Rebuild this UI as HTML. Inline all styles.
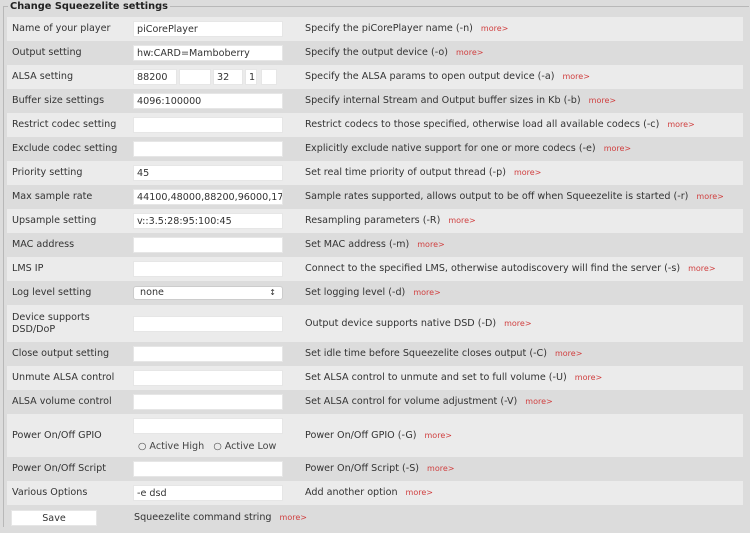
<!DOCTYPE html>
<html><head><meta charset="utf-8"><style>
html,body{margin:0;width:750px;height:533px;overflow:hidden}
body{background:#dcdcdc;font-family:"DejaVu Sans","Liberation Sans",sans-serif;font-size:9.6px;color:#333;position:relative}
.fs{position:absolute;left:3px;top:6px;width:745px;height:520px;border-top:1px solid #b8b8b8;border-left:1px solid #b8b8b8}
.lg{position:absolute;left:8px;top:1px;background:#dcdcdc;padding:0 2px;font-weight:bold;color:#222;font-size:9.8px;line-height:11px}
.r{position:absolute;left:7px;width:736px}
.l{background:#ebebeb}
.r span{position:absolute;white-space:nowrap}
.lab{left:5px}
.desc{left:298px}
.m{color:#d04040;font-size:8px;margin-left:8px}
.in{position:absolute;left:126px;width:150px;height:16px;background:#fff;border:1px solid #e6e6e6;box-sizing:border-box;font-size:9.6px;line-height:15px;padding-left:3px;white-space:nowrap;overflow:hidden}
</style></head><body>
<div class="fs"></div>
<div class="lg">Change Squeezelite settings</div>
<div id="c"></div>
<script>
var rows=[
["Name of your player","piCorePlayer","Specify the piCorePlayer name (-n)",17,24],
["Output setting","hw:CARD=Mamboberry","Specify the output device (-o)",41,24],
["ALSA setting","ALSA","Specify the ALSA params to open output device (-a)",65,24],
["Buffer size settings","4096:100000","Specify internal Stream and Output buffer sizes in Kb (-b)",89,24],
["Restrict codec setting","","Restrict codecs to those specified, otherwise load all available codecs (-c)",113,24],
["Exclude codec setting","","Explicitly exclude native support for one or more codecs (-e)",137,24],
["Priority setting","45","Set real time priority of output thread (-p)",161,24],
["Max sample rate","44100,48000,88200,96000,176400","Sample rates supported, allows output to be off when Squeezelite is started (-r)",185,24],
["Upsample setting","v::3.5:28:95:100:45","Resampling parameters (-R)",209,24],
["MAC address","","Set MAC address (-m)",233,24],
["LMS IP","","Connect to the specified LMS, otherwise autodiscovery will find the server (-s)",257,24],
["Log level setting","SEL","Set logging level (-d)",281,24],
["Device supports<br>DSD/DoP","","Output device supports native DSD (-D)",305,37],
["Close output setting","","Set idle time before Squeezelite closes output (-C)",342,24],
["Unmute ALSA control","","Set ALSA control to unmute and set to full volume (-U)",366,24],
["ALSA volume control","","Set ALSA control for volume adjustment (-V)",390,24],
["Power On/Off GPIO","GPIO","Power On/Off GPIO (-G)",414,43],
["Power On/Off Script","","Power On/Off Script (-S)",457,24],
["Various Options","-e dsd","Add another option",481,24],
["SAVE","","",505,24]];
var h="";
rows.forEach(function(r,i){
var t=r[3],H=r[4],cy=H/2;
h+='<div class="r'+(i%2==0&&i<19?' l':'')+'" style="top:'+t+'px;height:'+H+'px">';
if(r[0]=="SAVE"){
h+='<div class="in" style="left:4px;width:86px;top:5px;text-align:center;padding:0">Save</div><span style="left:127px;top:7px">Squeezelite command string<span class="m" style="position:static">more&gt;</span></span></div>';return;}
var ly=r[0].indexOf("<br>")>0?cy-12:cy-6;
h+='<span class="lab" style="top:'+ly+'px;line-height:12px">'+r[0]+'</span>';
if(r[1]=="ALSA"){
[[126,44,"88200"],[172,32,""],[206,30,"32"],[238,12,"1"],[254,16,""]].forEach(function(b){h+='<div class="in" style="left:'+b[0]+'px;width:'+b[1]+'px;top:'+(cy-8)+'px">'+b[2]+'</div>'});
}else if(r[1]=="SEL"){
h+='<div class="in" style="top:'+(cy-7)+'px;height:14px;border-radius:3px;border-color:#ccc;line-height:12px;padding-left:6px">none<span style="right:6px;top:0;font-size:8px">&#8597;</span></div>';
}else if(r[1]=="GPIO"){
h+='<div class="in" style="top:4px"></div><span style="left:131px;top:27px;color:#444">&#9675; Active High &nbsp; &#9675; Active Low</span>';
}else{
h+='<div class="in" style="top:'+(cy-8)+'px">'+r[1]+'</div>';}
h+='<span class="desc" style="top:'+(cy-6)+'px;line-height:12px">'+r[2]+'<span class="m" style="position:static">more&gt;</span></span></div>';
});
document.getElementById("c").innerHTML=h;
</script>
</body></html>
